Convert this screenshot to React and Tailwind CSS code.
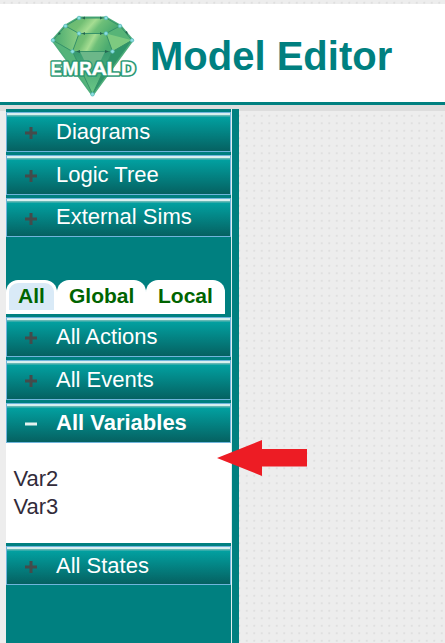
import React from 'react';

const dots =
  'bg-[#ededed] bg-[radial-gradient(circle_at_center,#dedede_0.6px,transparent_1.5px)] bg-[length:7.5px_7.5px]';

const nodes = [
  [39, 14], [66, 14], [25.5, 22], [80, 22], [39, 29.5], [66, 29.5],
  [13, 36.3], [92, 36.3], [32.5, 47.5], [72.5, 47.5], [52.5, 90.3],
];

const letters = [
  ['E', 10.7, 11], ['M', 22.5, 16], ['R', 39.3, 12.5], ['A', 51.5, 15.5], ['L', 66.5, 13], ['D', 81, 14.5],
];

function Logo() {
  return (
    <svg viewBox="0 0 106 96" className="h-24 w-[106px] shrink-0">
      <defs>
        <linearGradient id="face" x1="0" y1="0" x2="1" y2="0.25">
          <stop offset="0" stopColor="#62b570" />
          <stop offset="0.35" stopColor="#72bf74" />
          <stop offset="0.55" stopColor="#a5dd92" />
          <stop offset="0.7" stopColor="#6dbf78" />
          <stop offset="1" stopColor="#4bab70" />
        </linearGradient>
        <linearGradient id="side" x1="0" y1="0" x2="1" y2="0">
          <stop offset="0" stopColor="#45a86f" />
          <stop offset="1" stopColor="#8dd084" />
        </linearGradient>
        <linearGradient id="tip" x1="0" y1="0" x2="0" y2="1">
          <stop offset="0" stopColor="#379a70" />
          <stop offset="1" stopColor="#6cc887" />
        </linearGradient>
      </defs>
      <path d="M39 14H66L80 22L92 36.3L52.5 90.3L13 36.3L25.5 22Z" fill="#4fb278" stroke="#4fae7b" strokeWidth="3" strokeLinejoin="round" />
      <path d="M39 14H66L80 22L66 29.5H39L25.5 22Z" fill="url(#face)" />
      <path d="M25.5 22L39 29.5L32.5 47.5L13 36.3Z" fill="url(#side)" />
      <path d="M39 29.5H66L72.5 47.5H32.5Z" fill="url(#face)" />
      <path d="M66 29.5L80 22L92 36.3L72.5 47.5Z" fill="#57b477" />
      <path d="M66 29.5L92 36.3L72.5 47.5Z" fill="#7dca80" />
      <path d="M13 36.3L32.5 47.5L52.5 90.3Z" fill="#55b47a" />
      <path d="M32.5 47.5H72.5L52.5 90.3Z" fill="url(#tip)" />
      <path d="M40 47.5L52.5 74L65 47.5Z" fill="#6cb789" />
      <path d="M72.5 47.5L92 36.3L52.5 90.3Z" fill="#2f9569" />
      <path
        d="M39 14H66L80 22L92 36.3M13 36.3L25.5 22L39 14M25.5 22L39 29.5H66L80 22M39 29.5L32.5 47.5L13 36.3M66 29.5L72.5 47.5L92 36.3M32.5 47.5H72.5M32.5 47.5L52.5 90.3L72.5 47.5"
        fill="none"
        stroke="#369269"
        strokeWidth="1"
      />
      <path d="M42 14l3-1.5v3zM60 12.5v3l3-1.5zM42 29.5l3-1.5v3zM60 28v3l3-1.5zM36 47.5l4-1.5v3zM65 46v3l4-1.5zM18 31l1-3 2 2zM85 28l3 3-1-4z" fill="#246650" />
      {nodes.map(([x, y]) => (
        <circle key={`${x}-${y}`} cx={x} cy={y} r="1.8" fill="#8fe0e0" stroke="#58b9bd" strokeWidth="0.7" />
      ))}
      <g fontFamily="'Liberation Sans', Arial, sans-serif" fontWeight="700" fontSize="18.5" strokeLinejoin="round">
        {letters.map(([ch, x, w]) => (
          <text key={`edge-${ch}`} x={x} y="71" textLength={w} lengthAdjust="spacingAndGlyphs" fill="#178563" stroke="#2b9873" strokeWidth="3.6">{ch}</text>
        ))}
        {letters.map(([ch, x, w]) => (
          <text key={ch} x={x} y="71" textLength={w} lengthAdjust="spacingAndGlyphs" fill="#fff" stroke="#fff" strokeWidth="0.4" aria-hidden="true">{ch}</text>
        ))}
      </g>
    </svg>
  );
}

function Bar({ label, open, height = 'h-10', line = 'leading-[38px]' }) {
  return (
    <button
      className={`${height} ${line} flex w-[225px] shrink-0 items-start border border-[#6fb5dc] bg-[linear-gradient(to_bottom,#d8f0ef_0px,#d8f0ef_2px,#65b8b5_2px,#65b8b5_3px,#02a0a0_4px,#056161_100%)] pl-[18px] text-left text-[22px] text-white ${open ? 'font-bold' : ''}`}
    >
      <svg viewBox="0 0 12 12" className="mt-[14px] mr-[19px] h-3 w-3 shrink-0">
        {open ? (
          <path d="M0 4.5H12V7.5H0Z" fill="#e4f2ef" />
        ) : (
          <path d="M4.5 0h3v4.5H12v3H7.5V12h-3V7.5H0v-3h4.5z" fill="#444b4b" />
        )}
      </svg>
      <span className="whitespace-nowrap">{label}</span>
    </button>
  );
}

function Tabs() {
  return (
    <div className="mt-[43px] mb-[3px] flex h-[34px] shrink-0 text-[21px] leading-[32px] font-bold text-[#006400]">
      <div className="w-[51px] rounded-t-[12px] bg-white px-[3px] pt-[3px]">
        <div className="h-[27px] w-[45px] rounded-t-[9px] bg-[#d9eaf7] pl-[9px] leading-[26px]">All</div>
      </div>
      <div className="w-[89px] rounded-t-[12px] bg-white pl-3">Global</div>
      <div className="w-[79px] rounded-t-[12px] bg-white pl-3">Local</div>
    </div>
  );
}

export default function App() {
  return (
    <div className="flex h-[643px] w-[445px] flex-col overflow-hidden bg-[#ededed] font-['Liberation_Sans',Arial,sans-serif]">
      <div className={`h-1 shrink-0 bg-position-[0.5px_-1px] ${dots}`} />
      <header className="flex h-[101px] shrink-0 items-start border-b-[3px] border-[#008080] bg-white pl-[40px]">
        <Logo />
        <h1 className="mt-[28px] ml-1 text-[40px] leading-[48px] font-bold whitespace-nowrap text-[#008080]">Model Editor</h1>
      </header>
      <div className="h-1 shrink-0 bg-[#dddddd]" />
      <div className="flex min-h-0 grow">
        <div className="w-1.5 shrink-0 border-t-2 border-[#dddddd]" />
        <aside className="relative flex w-[233px] shrink-0 bg-[#008080]">
          <nav className="flex w-[225px] flex-col pt-[3px]">
            <div className="flex flex-col gap-[3px]">
              <Bar label="Diagrams" />
              <Bar label="Logic Tree" />
              <Bar label="External Sims" height="h-[39px]" line="leading-[36px]" />
            </div>
            <Tabs />
            <div className="flex flex-col gap-[3px]">
              <Bar label="All Actions" />
              <Bar label="All Events" />
              <div>
                <Bar label="All Variables" open />
                <ul className="h-[100px] w-[225px] bg-white pt-[22px] pl-[7.5px] text-[22px] leading-[28px] text-[#322b3a]">
                  <li>Var2</li>
                  <li>Var3</li>
                </ul>
              </div>
              <Bar label="All States" height="h-[39px]" />
            </div>
          </nav>
          <div className="w-px bg-[#e0f0f0]" />
          <svg viewBox="0 0 90 36" className="absolute top-[331px] left-[211px] h-9 w-[90px]">
            <path d="M0 18L45 0V9H90V26.5H45V36Z" fill="#ed1c24" />
          </svg>
        </aside>
        <main className={`grow border-t-2 border-[#dddddd] bg-position-[4px_1px] ${dots}`} />
      </div>
    </div>
  );
}
